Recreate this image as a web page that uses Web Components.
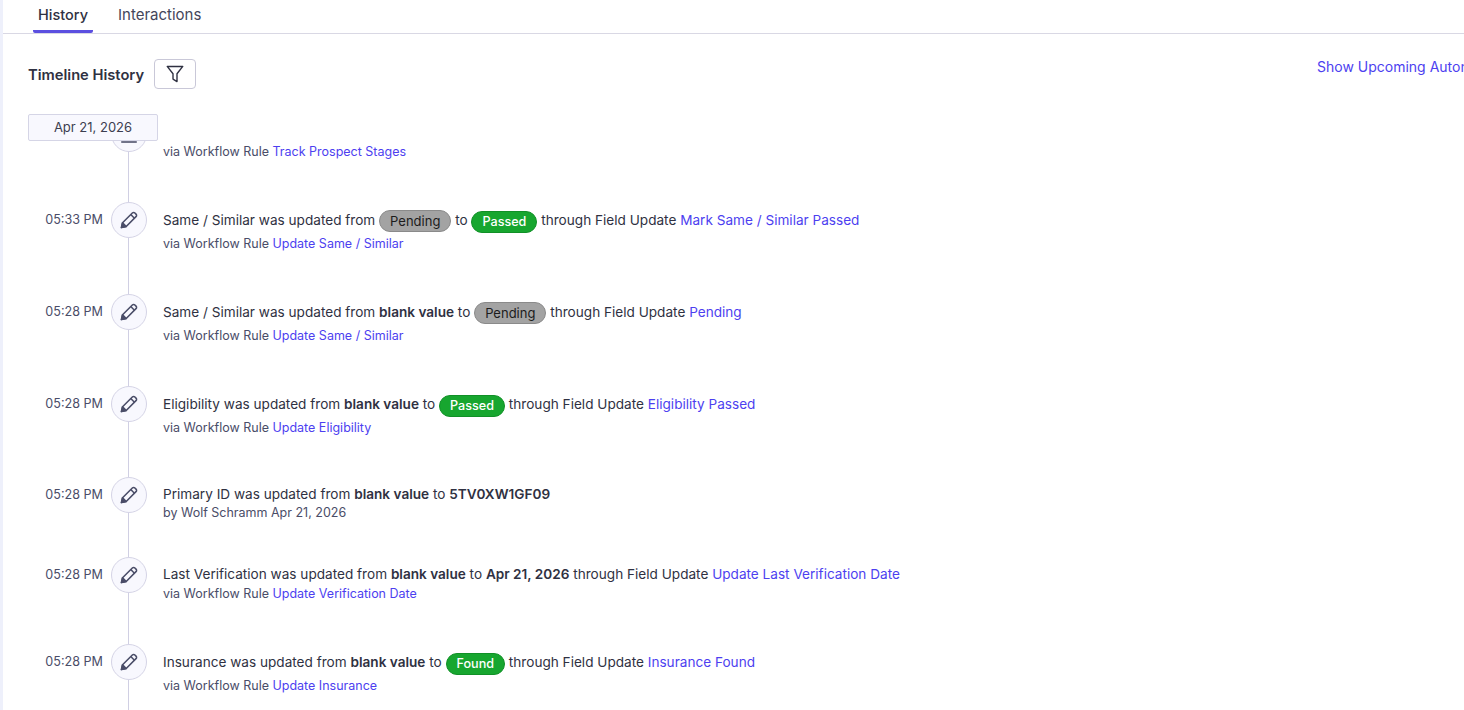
<!DOCTYPE html>
<html>
<head>
<meta charset="utf-8">
<style>
  html, body { margin: 0; height: 100%; overflow: hidden; background: #fff; }
  body { font-family: Inter, "Noto Sans", sans-serif; color: #2f3142; }
</style>
</head>
<body>
<history-page>
  <tl-row time="" height="86" cut="25" icon="bar" shift="-6">
    <span slot="main">Stage was updated</span>
    <span slot="sub">via Workflow Rule <a>Track Prospect Stages</a></span>
  </tl-row>
  <tl-row time="05:33 PM" height="92">
    <span slot="main">Same / Similar was updated from <tl-pill kind="grey">Pending</tl-pill> to <tl-pill kind="green">Passed</tl-pill> through Field Update <a>Mark Same / Similar Passed</a></span>
    <span slot="sub">via Workflow Rule <a>Update Same / Similar</a></span>
  </tl-row>
  <tl-row time="05:28 PM" height="92">
    <span slot="main">Same / Similar was updated from <b>blank value</b> to <tl-pill kind="grey">Pending</tl-pill> through Field Update <a>Pending</a></span>
    <span slot="sub">via Workflow Rule <a>Update Same / Similar</a></span>
  </tl-row>
  <tl-row time="05:28 PM" height="91">
    <span slot="main">Eligibility was updated from <b>blank value</b> to <tl-pill kind="green">Passed</tl-pill> through Field Update <a>Eligibility Passed</a></span>
    <span slot="sub">via Workflow Rule <a>Update Eligibility</a></span>
  </tl-row>
  <tl-row time="05:28 PM" height="80" sub-gap="19" shift="-1">
    <span slot="main">Primary ID was updated from <b>blank value</b> to <b>5TV0XW1GF09</b></span>
    <span slot="sub">by Wolf Schramm Apr 21, 2026</span>
  </tl-row>
  <tl-row time="05:28 PM" height="87" sub-gap="20" shift="-1">
    <span slot="main">Last Verification was updated from <b>blank value</b> to <b>Apr 21, 2026</b> through Field Update <a>Update Last Verification Date</a></span>
    <span slot="sub">via Workflow Rule <a>Update Verification Date</a></span>
  </tl-row>
  <tl-row time="05:28 PM" height="92">
    <span slot="main">Insurance was updated from <b>blank value</b> to <tl-pill kind="green">Found</tl-pill> through Field Update <a>Insurance Found</a></span>
    <span slot="sub">via Workflow Rule <a>Update Insurance</a></span>
  </tl-row>
</history-page>

<script>
const pageTemplate = document.createElement('template');
pageTemplate.innerHTML = `
<style>
  :host { display: flex; height: 710px; overflow: hidden; }
  .strip { width: 3px; flex: none; background: #eef0fb; }
  .main { flex: 1; min-width: 0; display: flex; flex-direction: column; }
  .tabs { display: flex; height: 33px; border-bottom: 1px solid #d9d8e4; padding-left: 30px; flex: none; }
  .tab { width: 60px; text-align: center; font-size: 14.5px; line-height: 30px; color: #44465a; box-sizing: border-box; height: 33px; }
  .tab.on { color: #2f3142; font-weight: 500; border-bottom: 3px solid #5b4fe0; border-radius: 0 0 2px 2px; }
  .tab + .tab { width: auto; margin-left: 25px; font-size: 15px; }
  .head { display: flex; align-items: center; justify-content: space-between; padding: 25px 0 0 25px; height: 30px; flex: none; }
  .title-wrap { display: flex; align-items: center; gap: 10px; }
  .title { font-size: 14.7px; font-weight: 600; color: #2f3142; padding-top: 1px; }
  .filter { width: 40px; height: 28px; border: 1px solid #c9c8d8; border-radius: 4px; display: flex; align-items: center; justify-content: center; }
  .upcoming { font-size: 14px; color: #4d3ff0; white-space: nowrap; margin-top: -15px; width: 147px; overflow: hidden; }
  .date { margin: 25px 0 0 25px; width: 128px; height: 25px; border: 1px solid #d5d5e6; border-radius: 2px; background: #f8f8fe; font-size: 13px; line-height: 25px; text-align: center; color: #3c3e50; flex: none; }
  .scroll { flex: 1; overflow: hidden; min-height: 0; }
</style>
<div class="strip"></div>
<div class="main">
  <div class="tabs"><div class="tab on">History</div><div class="tab">Interactions</div></div>
  <div class="head">
    <div class="title-wrap">
      <span class="title">Timeline History</span>
      <span class="filter"><svg width="20" height="20" viewBox="0 0 18 18" fill="none" stroke="#2f3142" stroke-width="1.25" stroke-linejoin="round"><path d="M2 2.2h14l-5.2 6.6v7L7.2 13.6V8.8z"/></svg></span>
    </div>
    <span class="upcoming">Show Upcoming Automations</span>
  </div>
  <div class="date">Apr 21, 2026</div>
  <div class="scroll"><slot></slot></div>
</div>`;

class HistoryPage extends HTMLElement {
  constructor() {
    super();
    this.attachShadow({ mode: 'open' });
    this.shadowRoot.appendChild(pageTemplate.content.cloneNode(true));
  }
}
customElements.define('history-page', HistoryPage);

const pencil = `<svg width="20" height="20" viewBox="0 0 18 18" fill="none" stroke="#4a4d68" stroke-width="1.4" stroke-linejoin="round"><path d="M2.2 15.8l1-4.3L12 2.7a1.6 1.6 0 0 1 2.3 0l1 1a1.6 1.6 0 0 1 0 2.3l-8.8 8.8z"/><path d="M10.6 4.1l3.3 3.3"/><path d="M2.2 15.8l1-4.3 3.3 3.3z" fill="#4a4d68"/></svg>`;
const bar = `<svg width="20" height="20" viewBox="0 0 18 18" fill="none" stroke="#4a4d68" stroke-width="1.4"><path d="M2 16.2h14"/></svg>`;

const rowTemplate = document.createElement('template');
rowTemplate.innerHTML = `
<style>
  :host { display: flex; box-sizing: border-box; }
  .time { width: 108px; flex: none; text-align: right; font-size: 12.6px; color: #4a4d68; box-sizing: border-box; padding-right: 8px; line-height: 36px; height: 36px; }
  .rail { width: 36px; flex: none; display: flex; flex-direction: column; }
  .circle { width: 36px; height: 36px; box-sizing: border-box; border: 1px solid #d5d4e6; border-radius: 50%; background: #f8f8fe; display: flex; align-items: center; justify-content: center; flex: none; }
  .line { flex: 1; width: 1px; margin-left: 17px; background: #d0cfe3; }
  .text { margin-left: 16px; padding-top: 8px; min-width: 0; }
  .main { font-size: 13.6px; line-height: 20px; height: 20px; white-space: nowrap; color: #2f3142; }
  .sub { font-size: 12.5px; line-height: 18px; white-space: nowrap; color: #4a4d68; }
  ::slotted(span) { display: block; }
</style>
<div class="time"></div>
<div class="rail"><div class="circle"></div><div class="line"></div></div>
<div class="text">
  <div class="main"><slot name="main"></slot></div>
  <div class="sub"><slot name="sub"></slot></div>
</div>`;

class TlRow extends HTMLElement {
  constructor() {
    super();
    this.attachShadow({ mode: 'open' });
    this.shadowRoot.appendChild(rowTemplate.content.cloneNode(true));
  }

  connectedCallback() {
    this.render();
  }

  render() {
    const root = this.shadowRoot;
    root.querySelector('.time').textContent = this.getAttribute('time') || '';
    root.querySelector('.circle').innerHTML = this.getAttribute('icon') === 'bar' ? bar : pencil;
    this.style.height = this.getAttribute('height') + 'px';
    if (this.hasAttribute('cut')) this.style.marginTop = '-' + this.getAttribute('cut') + 'px';
    const gap = Number(this.getAttribute('sub-gap') || 24);
    root.querySelector('.sub').style.marginTop = (gap - 19) + 'px';
    root.querySelector('.text').style.marginTop = (this.getAttribute('shift') || 0) + 'px';
    // links and bold live in the light dom, keep them styled from here
    this.querySelectorAll('a').forEach(a => { a.style.color = '#4d3ff0'; });
    this.querySelectorAll('b').forEach(b => { b.style.fontWeight = '600'; });
  }
}
customElements.define('tl-row', TlRow);

const pillTemplate = document.createElement('template');
pillTemplate.innerHTML = `
<style>
  :host { display: inline-block; font-size: 13px; line-height: 20px; height: 20px; padding: 0 10px; border-radius: 11px; border: 1px solid #8a8a8a; background: #a3a3a3; color: #1c1c1c; vertical-align: -1.5px; transform: translateY(-1px); }
  :host([kind="green"]) { background: #17a62f; border-color: #119027; color: #fff; font-weight: 500; font-size: 12.6px; }
</style>
<slot></slot>`;

class TlPill extends HTMLElement {
  constructor() {
    super();
    this.attachShadow({ mode: 'open' });
    this.shadowRoot.appendChild(pillTemplate.content.cloneNode(true));
  }
}
customElements.define('tl-pill', TlPill);
</script>
</body>
</html>
